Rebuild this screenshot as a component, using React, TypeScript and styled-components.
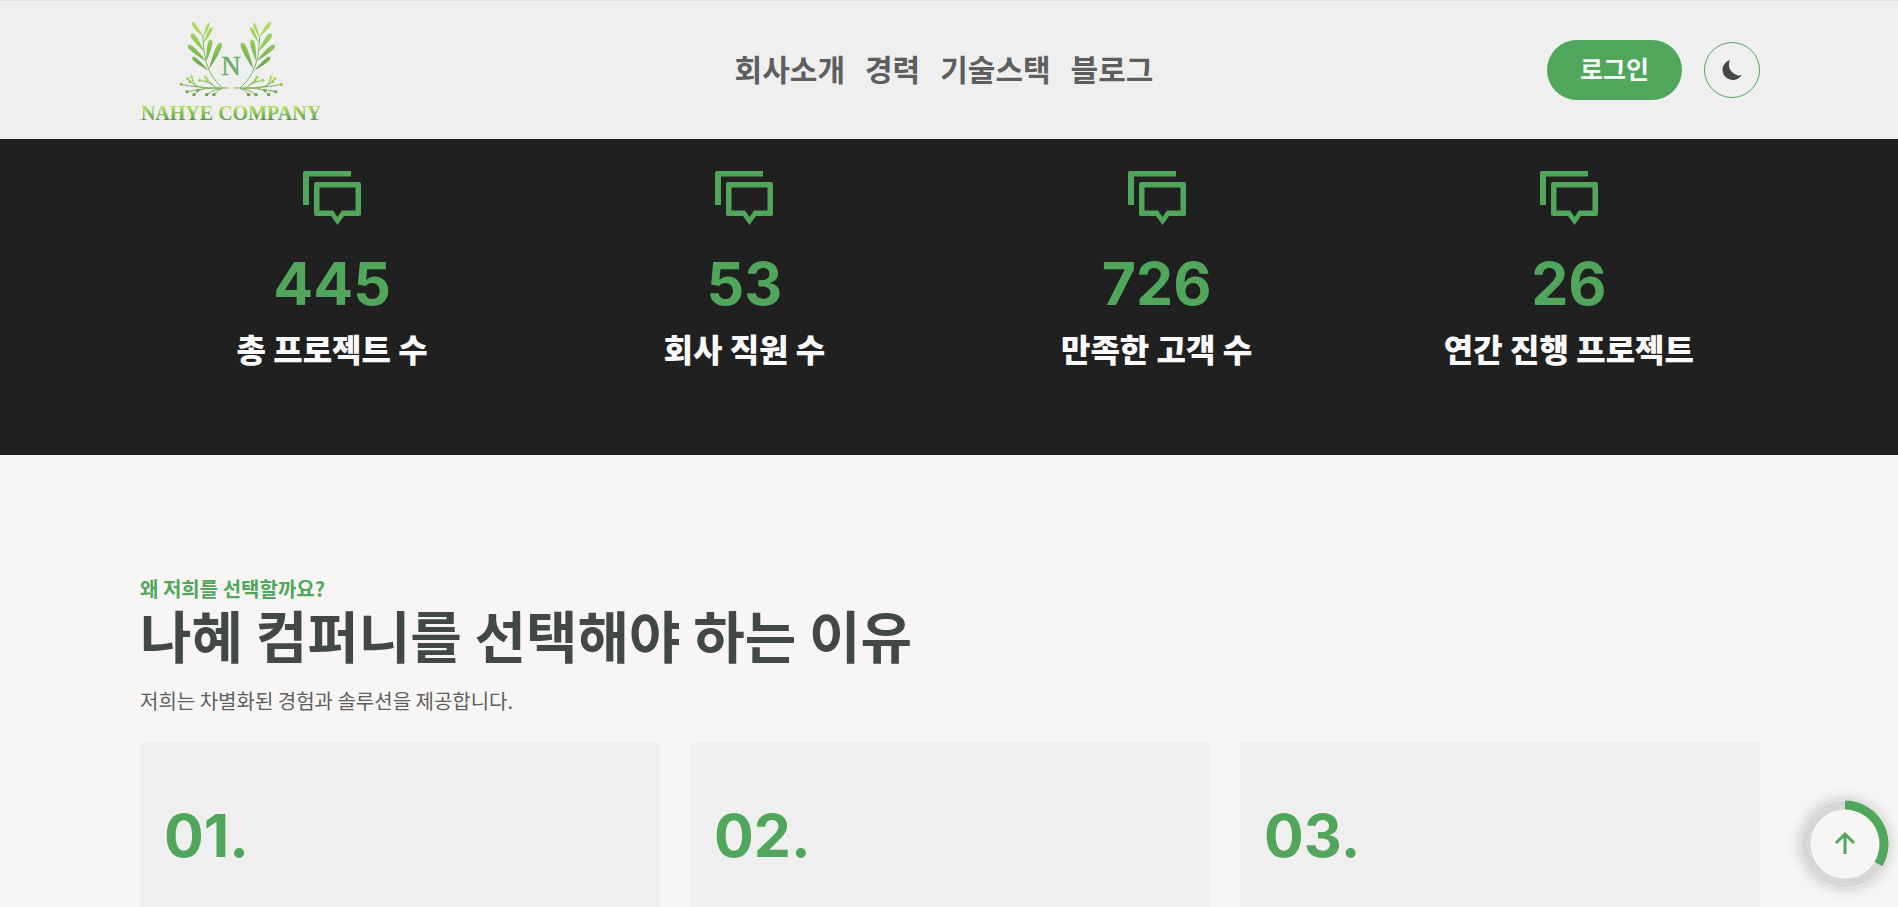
import React from "react";
import styled, { createGlobalStyle } from "styled-components";

const green = "#50a65a";
const ink = "#424843";

const GlobalStyle = createGlobalStyle`
  *, *::before, *::after { box-sizing: border-box; }
  body {
    margin: 0;
    background: #f7f6f4;
    color: ${ink};
    font-family: "Noto Sans CJK KR", "Noto Sans", sans-serif;
  }
  h2, h3, p { margin: 0; padding: 0; }
`;

const Page = styled.div`
  height: 100vh;
  overflow: hidden;
`;

const Header = styled.header`
  display: flex;
  justify-content: space-between;
  align-items: center;
  height: 139px;
  padding: 0 138px 0 141px;
  background: #efefef;
  border-top: 1px solid #e0e0e0;
`;

const LogoLink = styled.a`
  display: block;
  width: 180px;
  height: 138px;
`;

const Nav = styled.nav`
  display: flex;
  gap: 20px;
  padding: 0 0 4px 20px;
`;

const NavLink = styled.a`
  color: #5e5e5e;
  font-size: 30px;
  font-weight: 700;
  line-height: 44px;
  text-decoration: none;
`;

const Actions = styled.div`
  display: flex;
  align-items: center;
  gap: 22px;
`;

const LoginButton = styled.button`
  height: 60px;
  padding: 0 33px 5px;
  border: 0;
  border-radius: 30px;
  background: ${green};
  color: #fafafa;
  font: 700 25px/36px "Noto Sans CJK KR", sans-serif;
`;

const ThemeButton = styled.button`
  display: grid;
  place-items: center;
  width: 56px;
  height: 56px;
  padding: 0;
  border: 1px solid ${green};
  border-radius: 50%;
  background: transparent;
  color: ${ink};
`;

const Stats = styled.section`
  display: grid;
  grid-template-columns: repeat(4, 1fr);
  gap: 30px;
  padding: 29px 138px 84px 141px;
  background: #202020;
`;

const Stat = styled.div`
  display: flex;
  flex-direction: column;
  align-items: center;
`;

const BigNumber = styled.p`
  color: ${green};
  font: 700 59px/76px Inter, sans-serif;
`;

const StatValue = styled(BigNumber)`
  margin-top: 18px;
`;

const StatLabel = styled.p`
  margin-top: 3px;
  color: #fafafa;
  font-size: 32px;
  font-weight: 800;
  line-height: 46px;
`;

const Reasons = styled.section`
  padding: 120px 138px 0 140px;
`;

const Eyebrow = styled.p`
  color: ${green};
  font-size: 20px;
  font-weight: 700;
  line-height: 28px;
`;

const Title = styled.h2`
  font-size: 56px;
  font-weight: 700;
  line-height: 62px;
`;

const Lead = styled.p`
  margin-top: 22px;
  color: #5e5e5e;
  font-size: 20px;
  line-height: 28px;
`;

const Cards = styled.div`
  display: grid;
  grid-template-columns: repeat(3, 1fr);
  gap: 30px;
  margin-top: 27px;
`;

const Card = styled.article`
  min-height: 320px;
  padding: 56px 24px;
  border-radius: 6px;
  background: #efefef;
`;

const CardTitle = styled.h3`
  margin-top: 24px;
  font-size: 32px;
  font-weight: 700;
  line-height: 46px;
`;

const TopButton = styled.button`
  position: fixed;
  right: 9px;
  bottom: 19px;
  display: grid;
  place-items: center;
  width: 88px;
  height: 88px;
  padding: 0;
  border: 0;
  border-radius: 50%;
  background: #f7f6f4;
  box-shadow: 0 0 14px rgba(0, 0, 0, 0.22);
`;

/* Leaves as [tip x, tip y, base x, base y, half width]. */
const leaves = [
  [216, 67, 250, 112, 8],
  [267, 69, 249, 115, 6],
  [276, 82, 251, 130, 7],
  [214, 101, 253, 155, 10],
  [204, 135, 259, 184, 10],
  [273, 119, 259, 184, 10],
  [217, 172, 265, 212, 8],
  [303, 129, 267, 208, 11],
];

const leafPath = ([tx, ty, bx, by, w]: number[]) => {
  const dx = tx - bx;
  const dy = ty - by;
  const len = Math.hypot(dx, dy);
  const nx = (-dy / len) * w;
  const ny = (dx / len) * w;
  const ax = bx + dx * 0.4;
  const ay = by + dy * 0.4;
  return [
    `M${bx} ${by}`,
    `C${ax + nx * 0.5} ${ay + ny * 0.5} ${tx + nx * 1.3} ${ty + ny * 1.3} ${tx} ${ty}`,
    `C${tx - nx * 1.3} ${ty - ny * 1.3} ${ax - nx * 0.5} ${ay - ny * 0.5} ${bx} ${by}Z`,
  ].join("");
};

const berries = [
  [184, 253], [203, 236], [215, 231], [210, 245], [240, 241], [257, 232],
  [262, 241], [201, 275], [222, 284], [233, 271], [260, 284], [282, 284],
];

/* One half of the emblem; the other half is its mirror image. */
const Branch = () => (
  <g>
    <g fill="url(#leaf)">
      {leaves.map((leaf) => <path key={leaf.join()} d={leafPath(leaf)} />)}
    </g>
    <g fill="none" stroke="#7fb35c" strokeWidth="3">
      <path d="M249 108C250 150 256 185 268 212C280 236 294 252 308 264" />
      <path d="M326 264H290C260 263 220 262 184 253M250 262C230 260 215 252 203 236M230 259Q218 250 215 231M290 264C275 250 258 244 240 241M280 256Q266 246 257 232M298 264C270 264 235 268 201 275M255 265Q232 270 222 284M308 264Q280 268 260 284M308 264Q292 270 282 284" />
    </g>
    <g fill="url(#berry)">
      {berries.map(([cx, cy]) => <circle key={`${cx}-${cy}`} cx={cx} cy={cy} r="5" />)}
    </g>
  </g>
);

const Logo = () => (
  <svg width="180" height="138" viewBox="21 1 180 138" role="img" aria-label="Nahye Company">
    <defs>
      <linearGradient id="leaf" gradientUnits="userSpaceOnUse" x1="0" y1="65" x2="0" y2="215">
        <stop offset="0" stopColor="#b2e35c" />
        <stop offset="0.6" stopColor="#85bf52" />
        <stop offset="1" stopColor="#609a4b" />
      </linearGradient>
      <linearGradient id="berry" gradientUnits="userSpaceOnUse" x1="0" y1="228" x2="0" y2="288">
        <stop offset="0" stopColor="#b2e35c" />
        <stop offset="1" stopColor="#609a4b" />
      </linearGradient>
      <linearGradient id="word" x1="0" y1="0" x2="0" y2="1">
        <stop offset="0.2" stopColor="#b2e35c" />
        <stop offset="0.8" stopColor="#609a4b" />
      </linearGradient>
    </defs>
    <g transform="scale(0.3333)">
      <Branch />
      <g transform="translate(668 0) scale(-1 1)"><Branch /></g>
    </g>
    <text x="111" y="75" textAnchor="middle" fontFamily="Liberation Serif" fontSize="27" fill="#68ad60" stroke="#68ad60" strokeWidth="0.4">N</text>
    <text x="111" y="120" textAnchor="middle" fontFamily="Liberation Serif" fontWeight="700" fontSize="20" fill="url(#word)">NAHYE COMPANY</text>
  </svg>
);

const Moon = () => (
  <svg width="20" height="20" viewBox="0 0 20 20" fill="currentColor" aria-hidden="true">
    <path d="M8 0C6 4 7 9 10 12s6 4 9.500 3C18 18 14 20 10.500 20A10 10 0 0 1 .500 10C.500 5.500 3.500 1.500 8 0z" />
  </svg>
);

const Chat = () => (
  <svg width="60" height="60" viewBox="0 0 60 60" fill={green} aria-hidden="true">
    <path d="M3 3H49V8.500H7V37H1V5Q1 3 3 3z" />
    <path fillRule="evenodd" d="M14 14H57Q59 14 59 16V46Q59 48 57 48H42L35.500 57L29 48H14Q12 48 12 46V16Q12 14 14 14zM17.500 19.500V42.500H31L35.500 49L40 42.500H53.500V19.500z" />
  </svg>
);

const stats = [
  ["445", "총 프로젝트 수"],
  ["53", "회사 직원 수"],
  ["726", "만족한 고객 수"],
  ["26", "연간 진행 프로젝트"],
];

const reasons = [
  ["01.", "가장 빠른"],
  ["02.", "다양한 프로젝트"],
  ["03.", "신뢰할 수 있는"],
];

export default function App() {
  return (
    <Page>
      <GlobalStyle />
      <Header>
        <LogoLink href="#"><Logo /></LogoLink>
        <Nav>
          {["회사소개", "경력", "기술스택", "블로그"].map((name) => (
            <NavLink href="#" key={name}>{name}</NavLink>
          ))}
        </Nav>
        <Actions>
          <LoginButton type="button">로그인</LoginButton>
          <ThemeButton type="button" aria-label="테마 변경"><Moon /></ThemeButton>
        </Actions>
      </Header>
      <main>
        <Stats>
          {stats.map(([value, label]) => (
            <Stat key={label}>
              <Chat />
              <StatValue>{value}</StatValue>
              <StatLabel>{label}</StatLabel>
            </Stat>
          ))}
        </Stats>
        <Reasons>
          <Eyebrow>왜 저희를 선택할까요?</Eyebrow>
          <Title>나혜 컴퍼니를 선택해야 하는 이유</Title>
          <Lead>저희는 차별화된 경험과 솔루션을 제공합니다.</Lead>
          <Cards>
            {reasons.map(([number, title]) => (
              <Card key={number}>
                <BigNumber>{number}</BigNumber>
                <CardTitle>{title}</CardTitle>
              </Card>
            ))}
          </Cards>
        </Reasons>
      </main>
      <TopButton type="button" aria-label="맨 위로">
        <svg width="88" height="88" viewBox="0 0 88 88" fill="none" aria-hidden="true">
          <circle cx="44" cy="44" r="39" stroke="#d7d7d7" strokeWidth="9" />
          <path d="M44 5A39 39 0 0 1 77.500 64" stroke={green} strokeWidth="9" />
          <path d="M44 54V34M35 43L44 34L53 43" stroke={green} strokeWidth="3" />
        </svg>
      </TopButton>
    </Page>
  );
}
